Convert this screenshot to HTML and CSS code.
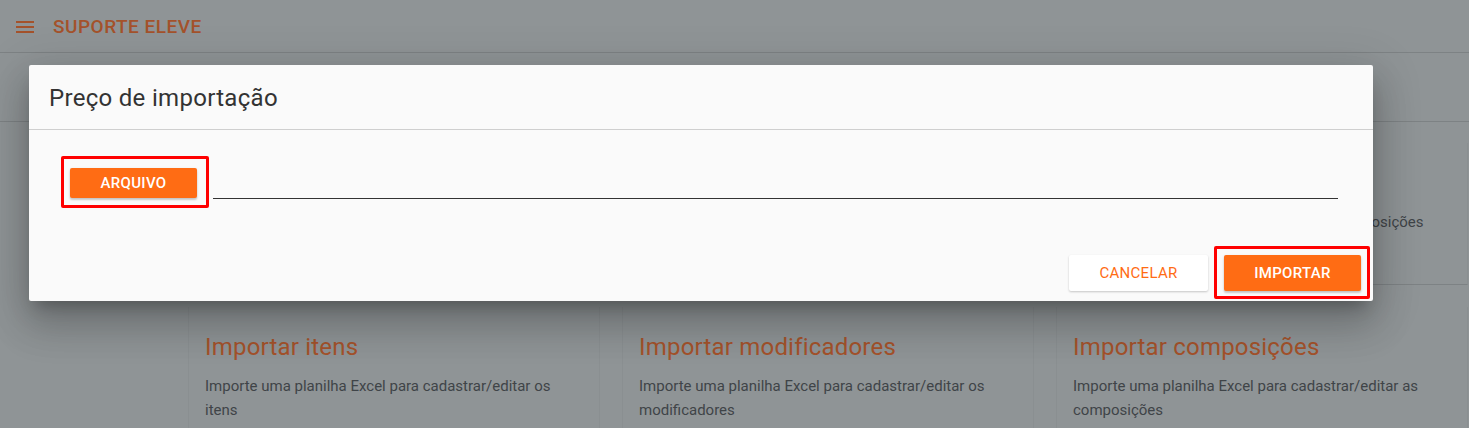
FILE: index.html
```html
<!DOCTYPE html>
<html lang="pt-BR">
<head>
    <meta charset="UTF-8">
    <meta name="viewport" content="width=device-width, initial-scale=1.0">
    <title>Suporte Eleve - Importação</title>
    <link rel="stylesheet" href="styles.css">
</head>
<body>
    <header class="toolbar">
        <svg class="menu-icon" width="18" height="12" viewBox="0 0 18 12">
            <rect x="0" y="0" width="18" height="2"/>
            <rect x="0" y="5" width="18" height="2"/>
            <rect x="0" y="10" width="18" height="2"/>
        </svg>
        <span class="brand">SUPORTE ELEVE</span>
    </header>
    <div class="subbar"></div>

    <main class="cards">
        <div class="card">
            <h3>Importar preços</h3>
            <p>Importe uma planilha Excel de preço dos itens</p>
        </div>
        <div class="card">
            <h3>Importar estoque</h3>
            <p>Importe uma planilha Excel de estoque dos itens</p>
        </div>
        <div class="card">
            <h3>Preço de composições</h3>
            <p>Importe a planilha Excel de preços das composições</p>
        </div>
        <div class="card">
            <h3>Importar itens</h3>
            <p>Importe uma planilha Excel para cadastrar/editar os itens</p>
        </div>
        <div class="card">
            <h3>Importar modificadores</h3>
            <p>Importe uma planilha Excel para cadastrar/editar os modificadores</p>
        </div>
        <div class="card">
            <h3>Importar composições</h3>
            <p>Importe uma planilha Excel para cadastrar/editar as composições</p>
        </div>
    </main>

    <div class="dialog">
        <div class="dialog-header">Preço de importação</div>
        <div class="dialog-body">
            <span class="highlight highlight-file">
                <button class="btn btn-raised btn-small">Arquivo</button>
            </span>
            <div class="file-line"></div>
        </div>
        <div class="dialog-actions">
            <button class="btn btn-flat">Cancelar</button>
            <span class="highlight highlight-submit">
                <button class="btn btn-raised">Importar</button>
            </span>
        </div>
    </div>
</body>
</html>
```

FILE: styles.css
```css
body {
    margin: 0;
    padding: 0;
    font-family: Roboto, "Noto Sans", Arial, sans-serif;
    background: #8f9496;
    color: #3c4043;
    height: 100vh;
    overflow: hidden;
}

.toolbar {
    height: 52px;
    display: flex;
    align-items: center;
    padding-left: 16px;
    border-bottom: 1px solid #7d8284;
}

.menu-icon {
    fill: #a4522b;
    margin-right: 19px;
    margin-top: 1px;
}

.brand {
    font-size: 19px;
    font-weight: 500;
    letter-spacing: 0.5px;
    color: #a4522b;
}

.subbar {
    height: 68px;
    border-bottom: 1px solid #7d8284;
}

.cards {
    display: grid;
    grid-template-columns: repeat(3, 412px);
    grid-auto-rows: minmax(142px, auto);
    column-gap: 22px;
    row-gap: 22px;
    padding: 21px 0 0 188px;
}

.card {
    border: 1px solid #8a8f91;
    border-top: none;
    border-bottom: 1px solid #7d8284;
    padding: 18px 16px 0;
}

.card h3 {
    margin: 8px 0 13px;
    font-size: 24px;
    font-weight: 400;
    letter-spacing: 0.2px;
    color: #a4522b;
}

.card p {
    margin: 0;
    font-size: 15px;
    line-height: 24px;
    color: #3f4448;
}

.dialog {
    position: absolute;
    left: 29px;
    top: 65px;
    width: 1344px;
    height: 236px;
    background: #fafafa;
    border-radius: 2px;
    box-shadow: 0 11px 15px -7px rgba(0, 0, 0, 0.25), 0 24px 38px 3px rgba(0, 0, 0, 0.16), 0 9px 46px 8px rgba(0, 0, 0, 0.12);
    display: flex;
    flex-direction: column;
}

.dialog-header {
    height: 65px;
    box-sizing: border-box;
    padding: 19px 20px 0;
    font-size: 24px;
    letter-spacing: 0.3px;
    color: #333;
    border-bottom: 1px solid #cfcfcf;
}

.dialog-body {
    display: flex;
    align-items: flex-start;
    padding: 26px 35px 0 32px;
}

.file-line {
    flex: 1;
    margin-top: 42px;
    margin-left: 4px;
    border-bottom: 1px solid #333;
}

.dialog-actions {
    margin-top: auto;
    display: flex;
    justify-content: flex-end;
    align-items: flex-end;
    gap: 6px;
    padding: 0 3px 2px 0;
}

.highlight {
    display: inline-block;
    border: 3px solid #f00;
    border-radius: 2px;
}

.highlight-file {
    padding: 9px 9px 7px 6px;
}

.highlight-submit {
    padding: 6px 6px 5px 7px;
}

.btn {
    font-family: Roboto, "Noto Sans", Arial, sans-serif;
    font-size: 15px;
    font-weight: 500;
    letter-spacing: 0.3px;
    text-transform: uppercase;
    border: none;
    border-radius: 2px;
    height: 36px;
    padding: 0;
    display: block;
    cursor: pointer;
}

.btn-raised {
    background: #ff6c14;
    color: #fff;
    width: 137px;
    box-shadow: 0 2px 2px rgba(0, 0, 0, 0.14), 0 1px 3px rgba(0, 0, 0, 0.12);
}

.btn-small {
    width: 127px;
    height: 30px;
}

.btn-flat {
    background: #fff;
    color: #ff6c14;
    font-weight: 400;
    width: 139px;
    margin-bottom: 8px;
    box-shadow: 0 1px 2px rgba(0, 0, 0, 0.14), 0 1px 3px rgba(0, 0, 0, 0.08);
}
```
